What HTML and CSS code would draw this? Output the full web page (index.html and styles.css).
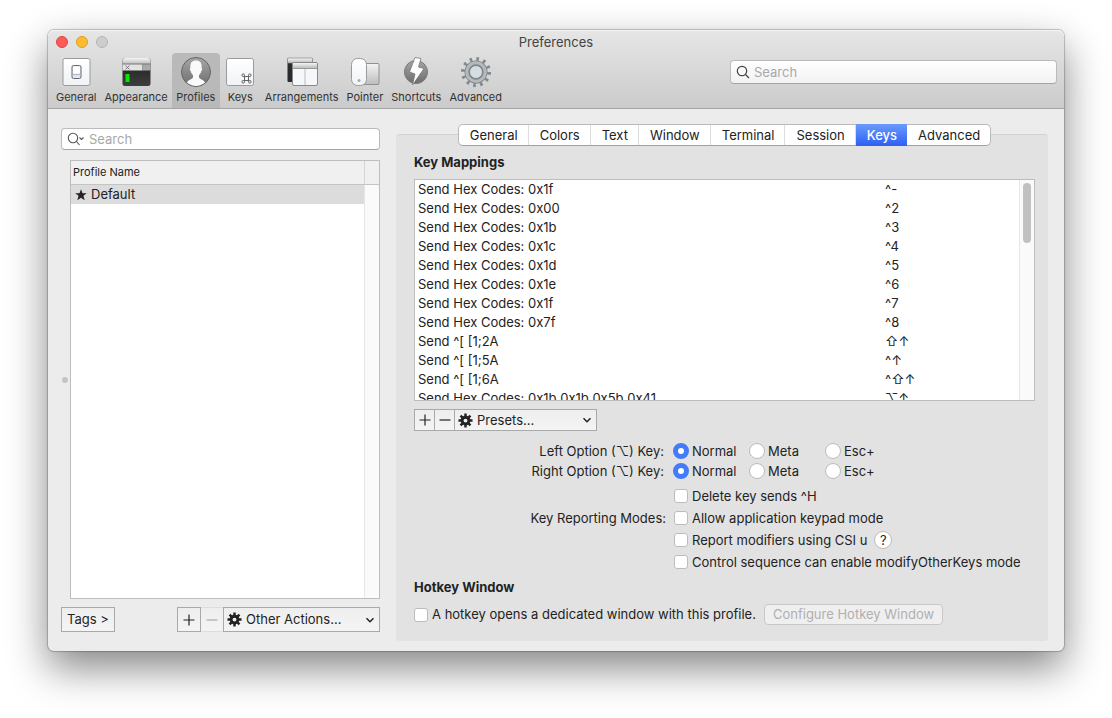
FILE: index.html
```html
<!DOCTYPE html>
<html lang="en">
<head>
  <meta charset="UTF-8" />
  <meta name="viewport" content="width=device-width, initial-scale=1.0"/>
  <title>Preferences</title>
  <link rel="stylesheet" href="styles.css">
</head>
<body>

  <!-- Shared icons -->
  <svg width="0" height="0" class="defs" aria-hidden="true">
    <defs>
      <linearGradient id="paper" x1="0" y1="0" x2="0" y2="1">
        <stop offset="0" stop-color="#ffffff"/><stop offset="1" stop-color="#f1f2f6"/>
      </linearGradient>
      <linearGradient id="silver" x1="0" y1="0" x2="0" y2="1">
        <stop offset="0" stop-color="#f4f4f4"/><stop offset="1" stop-color="#bdbdbd"/>
      </linearGradient>
      <linearGradient id="steel" x1="0" y1="0" x2="0" y2="1">
        <stop offset="0" stop-color="#a6a6a6"/><stop offset="1" stop-color="#6d6d6d"/>
      </linearGradient>
      <linearGradient id="screen" x1="0" y1="0" x2="0" y2="1">
        <stop offset="0" stop-color="#1c1c1c"/><stop offset="1" stop-color="#3d3f3d"/>
      </linearGradient>
    </defs>
    <symbol id="gear" viewBox="0 0 16 16">
      <g stroke="#222" stroke-width="2.6">
        <path d="M8 .5v15M.5 8h15M2.700 2.700l10.600 10.600M13.300 2.700L2.700 13.300"/>
      </g>
      <circle cx="8" cy="8" r="5.200" fill="#222"/>
      <circle cx="8" cy="8" r="2" fill="#f0f0f0"/>
    </symbol>
    <symbol id="chevron" viewBox="0 0 10 10">
      <path d="M1.5 3.2L5 6.7L8.5 3.2" fill="none" stroke="#222" stroke-width="1.5"/>
    </symbol>
    <symbol id="plus" viewBox="0 0 12 12">
      <path d="M6 .5v11M.5 6h11" stroke="currentColor" stroke-width="1.2"/>
    </symbol>
    <symbol id="minus" viewBox="0 0 12 12">
      <path d="M.5 6h11" stroke="currentColor" stroke-width="1.2"/>
    </symbol>
  </svg>

  <div class="window">
    <header class="header">
      <div class="titlebar">
        <div class="lights">
          <span class="light red"></span>
          <span class="light yellow"></span>
          <span class="light gray"></span>
        </div>
        <h1 class="title">Preferences</h1>
      </div>

      <div class="toolbar">
        <nav class="tools">
          <button type="button" class="tool">
            <svg viewBox="0 0 32 32">
              <rect x="3" y="2.5" width="27" height="27" rx="2" fill="url(#paper)" stroke="#9a9a9a"/>
              <rect x="12" y="9.500" width="9" height="13" rx="1.500" fill="#e4e6ea" stroke="#66696f"/>
              <rect x="13" y="10.500" width="7" height="7" rx="1" fill="#fff"/>
              <path d="M12.500 18.500h8" stroke="#a9b8d4"/>
            </svg>
            <span>General</span>
          </button>
          <button type="button" class="tool">
            <svg viewBox="0 0 32 32">
              <rect x="2.500" y="2" width="28" height="28" rx="2.500" fill="url(#screen)"/>
              <path d="M2.500 8V4.500Q2.500 2 5 2h23Q30.500 2 30.500 4.500V8z" fill="url(#silver)"/>
              <rect x="2.500" y="8" width="20" height="6.500" fill="#e2e2e2"/>
              <rect x="22.500" y="8" width="8" height="6.500" fill="#aaa"/>
              <path d="M2.500 8h28" stroke="#777"/>
              <path d="M5.500 9.500l4 4M9.500 9.500l-4 4" stroke="#666" stroke-width=".8"/>
              <rect x="5.500" y="18" width="4" height="8" fill="#00ea00"/>
            </svg>
            <span>Appearance</span>
          </button>
          <button type="button" class="tool active">
            <svg viewBox="0 0 32 32">
              <circle cx="16" cy="16" r="14.500" fill="url(#steel)" stroke="#666"/>
              <path d="M7 26.500c1-3 6-3 6-5.500v-2c-1.300-1-2-2.500-2.300-4-1.200-.8-1-2.500-.3-3C10 6.500 12 4.500 16 4.500s6 2 5.600 7.500c.8.5.8 2.200-.3 3-.3 1.500-1 3-2.300 4v2c0 2.500 5 2.500 6 5.500-5 4.500-13 4.500-18 0z" fill="#fafafa"/>
            </svg>
            <span>Profiles</span>
          </button>
          <button type="button" class="tool">
            <svg viewBox="0 0 32 32">
              <rect x="2.500" y="2.500" width="27" height="27" rx="2" fill="url(#paper)" stroke="#9a9a9a"/>
              <path d="M20.500 20.500h4v4h-4zM20.500 20.500h-1.300a1.300 1.300 0 1 1 1.300-1.300zM24.500 20.500v-1.300a1.300 1.300 0 1 1 1.300 1.300zM24.500 24.500h1.300a1.300 1.300 0 1 1-1.300 1.300zM20.500 24.500v1.300a1.300 1.300 0 1 1-1.300-1.300z" fill="none" stroke="#555" stroke-width="0.900"/>
            </svg>
            <span>Keys</span>
          </button>
          <button type="button" class="tool">
            <svg viewBox="0 0 32 32">
              <rect x="1.500" y="2" width="25" height="24" rx="1" fill="#2a2b2d"/>
              <rect x="1.500" y="2" width="25" height="5" rx="1" fill="url(#silver)" stroke="#8b8b8b" stroke-width=".7"/>
              <rect x="6.500" y="6.500" width="25" height="23" rx="1.500" fill="#f5f7fa" stroke="#888"/>
              <path d="M7 12V8q0-1 1-1h22q1 0 1 1v4z" fill="url(#silver)"/>
              <path d="M7 12.500h24" stroke="#999"/>
              <path d="M19 13v16" stroke="#bbb"/>
            </svg>
            <span>Arrangements</span>
          </button>
          <button type="button" class="tool">
            <svg viewBox="0 0 32 32">
              <rect x="12" y="7.500" width="18" height="21" rx="1" fill="url(#silver)" stroke="#909090"/>
              <rect x="2.500" y="2.500" width="15" height="27" rx="6" fill="url(#paper)" stroke="#9a9a9a"/>
              <circle cx="10" cy="24.500" r="1.500" fill="#aaa"/>
            </svg>
            <span>Pointer</span>
          </button>
          <button type="button" class="tool">
            <svg viewBox="0 0 32 32">
              <circle cx="16" cy="16" r="11.500" fill="url(#steel)" stroke="#777"/>
              <path d="M15 1.500l6 1-2.500 8.500 5.500 1.500L12.500 29l2.500-11-5.500-2z" fill="#fff" stroke="#777" stroke-width=".8"/>
            </svg>
            <span>Shortcuts</span>
          </button>
          <button type="button" class="tool">
            <svg viewBox="0 0 32 32">
              <circle cx="16" cy="16" r="13" fill="none" stroke="#84898c" stroke-width="4" stroke-dasharray="2.600 4.207"/>
              <circle cx="16" cy="16" r="9" fill="#d4dde1" stroke="#80868a" stroke-width="5"/>
              <circle cx="16" cy="16" r="9.200" fill="none" stroke="#b4babd" stroke-width="3"/>
              <circle cx="16" cy="16" r="6.500" fill="none" stroke="#7c8387"/>
            </svg>
            <span>Advanced</span>
          </button>
        </nav>

        <label class="search">
          <svg viewBox="0 0 14 14" class="lens"><circle cx="6" cy="6" r="4.700" fill="none" stroke="#444" stroke-width="1.200"/><path d="M9.500 9.500l3.500 3.500" stroke="#444" stroke-width="1.300"/></svg>
          <input type="search" placeholder="Search" aria-label="Search preferences">
        </label>
      </div>
    </header>

    <div class="content">
      <aside class="sidebar">
        <label class="search">
          <svg viewBox="0 0 18 14" class="lens wide"><circle cx="6" cy="6" r="4.700" fill="none" stroke="#555" stroke-width="1.100"/><path d="M9.500 9.500l3 3.500M12.500 5.500l2 2L16.500 5.500" fill="none" stroke="#555" stroke-width="1.100"/></svg>
          <input type="search" placeholder="Search" aria-label="Search profiles">
        </label>

        <div class="profiles">
          <span class="grip"></span>
          <div class="profile-list">
            <div class="list-head"><span>Profile Name</span></div>
            <div class="list-body">
              <ul>
                <li class="selected">
                  <svg viewBox="0 0 12 12" class="star"><path d="M6 .2l1.500 4h4.300L8.400 6.800l1.300 4.500L6 8.700l-3.700 2.600 1.300-4.500L.2 4.200h4.300z" fill="#222"/></svg>
                  Default
                </li>
              </ul>
              <div class="track"></div>
            </div>
          </div>
        </div>

        <div class="sidebar-actions">
          <button type="button" class="square tags">Tags &gt;</button>
          <div class="group">
            <button type="button" class="square add" aria-label="Add profile"><svg class="sign"><use href="#plus"/></svg></button>
            <button type="button" class="square remove" aria-label="Remove profile" disabled><svg class="sign"><use href="#minus"/></svg></button>
            <div class="pulldown">
              <svg class="gear"><use href="#gear"/></svg>
              <select aria-label="Other actions"><option>Other Actions...</option></select>
              <svg class="chevron"><use href="#chevron"/></svg>
            </div>
          </div>
        </div>
      </aside>

      <main class="panel">
        <div class="tabs" role="tablist">
          <button type="button" role="tab">General</button>
          <button type="button" role="tab">Colors</button>
          <button type="button" role="tab">Text</button>
          <button type="button" role="tab">Window</button>
          <button type="button" role="tab">Terminal</button>
          <button type="button" role="tab">Session</button>
          <button type="button" role="tab" class="current" aria-selected="true">Keys</button>
          <button type="button" role="tab">Advanced</button>
        </div>

        <h2>Key Mappings</h2>
        <div class="mappings">
          <table>
            <tr><td>Send Hex Codes: 0x1f</td><td>^-</td></tr>
            <tr><td>Send Hex Codes: 0x00</td><td>^2</td></tr>
            <tr><td>Send Hex Codes: 0x1b</td><td>^3</td></tr>
            <tr><td>Send Hex Codes: 0x1c</td><td>^4</td></tr>
            <tr><td>Send Hex Codes: 0x1d</td><td>^5</td></tr>
            <tr><td>Send Hex Codes: 0x1e</td><td>^6</td></tr>
            <tr><td>Send Hex Codes: 0x1f</td><td>^7</td></tr>
            <tr><td>Send Hex Codes: 0x7f</td><td>^8</td></tr>
            <tr><td>Send ^[ [1;2A</td><td>⇧↑</td></tr>
            <tr><td>Send ^[ [1;5A</td><td>^↑</td></tr>
            <tr><td>Send ^[ [1;6A</td><td>^⇧↑</td></tr>
            <tr><td>Send Hex Codes: 0x1b 0x1b 0x5b 0x41</td><td>⌥↑</td></tr>
          </table>
          <div class="track"><span class="thumb"></span></div>
        </div>

        <div class="group mapping-actions">
          <button type="button" class="square" aria-label="Add mapping"><svg class="sign"><use href="#plus"/></svg></button>
          <button type="button" class="square" aria-label="Remove mapping"><svg class="sign"><use href="#minus"/></svg></button>
          <div class="pulldown">
            <svg class="gear"><use href="#gear"/></svg>
            <select aria-label="Presets"><option>Presets...</option></select>
            <svg class="chevron"><use href="#chevron"/></svg>
          </div>
        </div>

        <form class="options">
          <div class="option" role="radiogroup" aria-labelledby="left-option">
            <span class="option-label" id="left-option">Left Option (⌥) Key:</span>
            <label class="choice"><input type="radio" name="left" checked>Normal</label>
            <label class="choice"><input type="radio" name="left">Meta</label>
            <label class="choice"><input type="radio" name="left">Esc+</label>
          </div>
          <div class="option" role="radiogroup" aria-labelledby="right-option">
            <span class="option-label" id="right-option">Right Option (⌥) Key:</span>
            <label class="choice"><input type="radio" name="right" checked>Normal</label>
            <label class="choice"><input type="radio" name="right">Meta</label>
            <label class="choice"><input type="radio" name="right">Esc+</label>
          </div>

          <div class="modes">
            <div class="option">
              <span class="option-label"></span>
              <label class="check"><input type="checkbox">Delete key sends ^H</label>
            </div>
            <div class="option">
              <span class="option-label">Key Reporting Modes:</span>
              <label class="check"><input type="checkbox">Allow application keypad mode</label>
            </div>
            <div class="option">
              <span class="option-label"></span>
              <label class="check"><input type="checkbox">Report modifiers using CSI u</label>
              <button type="button" class="help">?</button>
            </div>
            <div class="option">
              <span class="option-label"></span>
              <label class="check"><input type="checkbox">Control sequence can enable modifyOtherKeys mode</label>
            </div>
          </div>
        </form>

        <h2>Hotkey Window</h2>
        <div class="hotkey">
          <label class="check"><input type="checkbox">A hotkey opens a dedicated window with this profile.</label>
          <button type="button" class="configure" disabled>Configure Hotkey Window</button>
        </div>
      </main>
    </div>
  </div>

</body>
</html>
```
FILE: styles.css
```css
* {
  box-sizing: border-box;
}
body {
  min-height: 100vh;
  margin: 0;
  padding: 30px 48px;
  background-color: #fff;
  color: #222;
  font-family: Inter, "DejaVu Sans", sans-serif;
  font-size: 13px;
  line-height: 19px;
}
button, input, select {
  font: inherit;
  color: inherit;
  margin: 0;
}
svg {
  display: block;
  flex: none;
}
.defs {
  position: absolute;
}
.window {
  background-color: #ececec;
  border-radius: 6px;
  box-shadow: 0 0 1px 1px rgba(0, 0, 0, 0.22), 0 17px 40px rgba(0, 0, 0, 0.48);
}

/* header */
.header {
  height: 79px;
  border-radius: 6px 6px 0 0;
  border-bottom: 1px solid #a5a5a5;
  background: linear-gradient(#e6e6e6, #cbcbcb);
  box-shadow: inset 0 1px 0 #f4f4f4;
}
.titlebar {
  display: grid;
  grid-template-columns: 1fr auto 1fr;
  align-items: center;
  height: 23px;
  padding: 1px 8px 0;
}
.title {
  margin: 0;
  color: #444;
  font-size: 13px;
  font-weight: 400;
}
.lights {
  display: flex;
  gap: 8px;
}
.light {
  width: 12px;
  height: 12px;
  border-radius: 50%;
}
.red {
  background-color: #fc5b57;
  border: 1px solid #e2443f;
}
.yellow {
  background-color: #fdbc2e;
  border: 1px solid #dfa023;
}
.gray {
  background-color: #cdcdcd;
  border: 1px solid #b5b5b5;
}
.toolbar {
  display: flex;
  justify-content: space-between;
  padding: 0 7px 0 4px;
}
.tools {
  display: flex;
}
.tool {
  display: flex;
  flex-direction: column;
  align-items: center;
  min-width: 41px;
  height: 55px;
  padding: 3px 4px 0;
  border: none;
  background: none;
  color: #333;
  font-size: 11px;
  line-height: 18px;
}
.tool svg {
  width: 32px;
  height: 32px;
}
.tool.active {
  min-width: 48px;
  background-color: #b9b9b9;
  border-radius: 4px 4px 0 0;
}
.search {
  display: flex;
  align-items: center;
  height: 22px;
  padding: 0 5px;
  border: 1px solid #bbb;
  border-bottom-color: #a4a4a4;
  border-radius: 4px;
  background-color: #fff;
}
.toolbar .search {
  width: 327px;
  height: 24px;
  margin-top: 7px;
  background: linear-gradient(#fff, #f2f2f2);
}
.search input {
  flex: 1;
  min-width: 0;
  padding: 0 0 0 4px;
  border: none;
  outline: none;
  background: none;
}
.search input::placeholder {
  color: #a8a8a8;
}
.lens {
  width: 14px;
  height: 14px;
}
.lens.wide {
  width: 18px;
}

/* columns */
.content {
  display: flex;
  gap: 16px;
  padding: 19px 16px 10px 13px;
}
.sidebar {
  display: flex;
  flex: 0 0 319px;
  flex-direction: column;
}
.profiles {
  display: flex;
  flex: 1;
  align-items: center;
  gap: 2px;
  padding: 10px 0 8px 1px;
}
.grip {
  width: 6px;
  height: 6px;
  border-radius: 50%;
  background-color: #c4c4c4;
}
.profile-list {
  display: flex;
  flex: 1;
  flex-direction: column;
  align-self: stretch;
  border: 1px solid #bdbdbd;
  background-color: #fff;
}
.list-head {
  height: 24px;
  padding-right: 14px;
  border-bottom: 1px solid #c4c4c4;
  background-color: #f0f0f0;
  font-size: 11px;
  line-height: 23px;
}
.list-head span {
  display: block;
  padding-left: 2px;
  border-right: 1px solid #d4d4d4;
}
.list-body {
  display: flex;
  flex: 1;
}
.list-body ul {
  flex: 1;
  margin: 0;
  padding: 0;
  list-style: none;
}
.list-body li {
  display: flex;
  align-items: center;
  gap: 4px;
  padding-left: 4px;
}
.selected {
  background-color: #dcdcdc;
}
.star {
  width: 12px;
  height: 12px;
}
.track {
  width: 15px;
  padding: 3px;
  border-left: 1px solid #e6e6e6;
  background-color: #fafafa;
}
.thumb {
  display: block;
  width: 8px;
  height: 60px;
  border-radius: 4px;
  background-color: #c1c1c1;
}
.sidebar-actions {
  display: flex;
  justify-content: space-between;
  height: 25px;
  margin-bottom: 9px;
}

/* square buttons and pull-downs */
.square {
  display: flex;
  align-items: center;
  justify-content: center;
  padding: 0 5px;
  border: 1px solid #a9a9a9;
  background: linear-gradient(#eee, #f4f4f4);
}
.sign {
  width: 12px;
  height: 12px;
}
.group {
  display: flex;
}
.group .square {
  width: 24px;
  padding: 0;
}
.group .remove {
  width: 22px;
  border-color: #ddd;
  border-width: 1px 0;
  color: #aaa;
}
.pulldown {
  display: flex;
  align-items: center;
  width: 157px;
  padding: 0 4px 0 3px;
  border: 1px solid #a9a9a9;
  background: linear-gradient(#eee, #f4f4f4);
}
.pulldown select {
  flex: 1;
  min-width: 0;
  padding: 0 0 0 4px;
  border: none;
  outline: none;
  background: none;
  appearance: none;
}
.gear {
  width: 15px;
  height: 15px;
}
.chevron {
  width: 10px;
  height: 10px;
}

/* right panel */
.panel {
  flex: 1;
  min-width: 0;
  margin-top: 6px;
  padding: 0 13px 16px 18px;
  border-top: 1px solid #d2d2d2;
  border-radius: 4px;
  background-color: #e2e2e2;
}
.tabs {
  display: flex;
  width: max-content;
  height: 22px;
  margin: -11px auto 0;
  border: 1px solid #b9b9b9;
  border-bottom-color: #a0a0a0;
  border-radius: 5px;
  background-color: #fff;
}
.tabs button {
  padding: 0 10px 0 11px;
  border: none;
  border-right: 1px solid #ddd;
  background: none;
  line-height: 18px;
}
.tabs button:last-child {
  border-right: none;
}
.tabs .current {
  margin: -1px 0;
  border: none;
  background: linear-gradient(#6a9bfa, #2c5ff6);
  color: #fff;
  font-weight: 500;
}
h2 {
  margin: 0;
  font-size: 13px;
  font-weight: 700;
  line-height: 19px;
}
.tabs + h2 {
  margin: 7px 0;
}
.mappings {
  display: flex;
  height: 222px;
  overflow: hidden;
  border: 1px solid #bdbdbd;
  background-color: #fff;
}
.mappings table {
  flex: 1;
  align-self: flex-start;
  border-collapse: collapse;
}
.mappings td {
  height: 19px;
  padding: 0 0 0 3px;
  line-height: 19px;
}
.mappings td + td {
  width: 137px;
}
.mapping-actions {
  height: 22px;
  margin: 8px 0 10px;
}
.mapping-actions .square {
  width: 20px;
  border-right: none;
}
.mapping-actions .pulldown {
  width: 143px;
}
.option {
  display: flex;
  align-items: center;
  height: 20px;
}
.option-label {
  width: 250px;
  margin-right: 9px;
  text-align: right;
}
.choice, .check {
  display: flex;
  align-items: center;
  gap: 3px;
}
.choice {
  width: 76px;
}
.choice input, .check input {
  flex: none;
  appearance: none;
  border: 1px solid #bcbcbc;
  background-color: #fff;
}
.choice input {
  width: 16px;
  height: 16px;
  border-radius: 50%;
}
.choice input:checked {
  border: 5px solid #447bfb;
}
.check {
  gap: 4px;
}
.check input {
  width: 14px;
  height: 14px;
  border-radius: 3px;
}
.modes {
  padding: 4px 0 5px;
}
.modes .option {
  height: 22px;
}
.modes .option-label {
  width: 252px;
  margin-right: 8px;
}
.help {
  width: 18px;
  height: 18px;
  margin-left: 7px;
  padding: 0;
  border: 1px solid #bbb;
  border-radius: 50%;
  background-color: #fff;
  line-height: 16px;
}
.hotkey {
  display: flex;
  align-items: center;
  gap: 8px;
  margin-top: 7px;
}
.configure {
  height: 21px;
  padding: 0 8px;
  border: 1px solid #c8c8c8;
  border-radius: 4px;
  background-color: #efefef;
  color: #b0b0b0;
  line-height: 19px;
}
```
